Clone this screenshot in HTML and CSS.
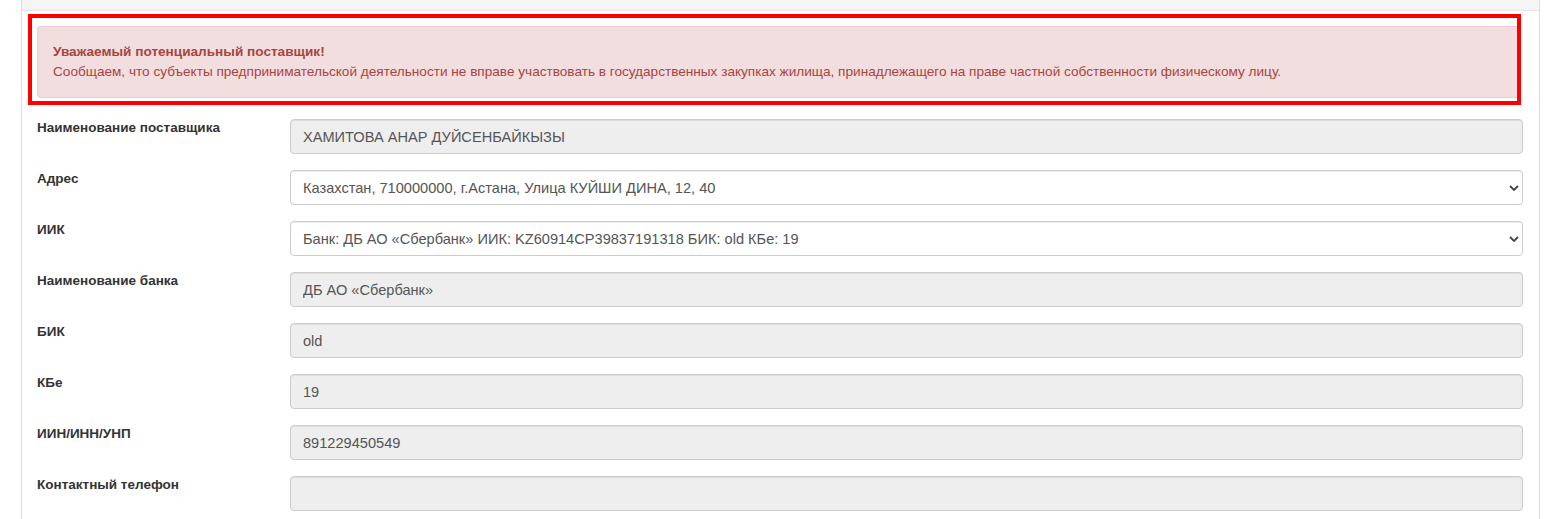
FILE: index.html
```html
<!DOCTYPE html>
<html lang="ru">
<head>
    <meta charset="UTF-8">
    <meta name="viewport" content="width=device-width, initial-scale=1.0">
    <title>Поставщик</title>
    <link rel="stylesheet" href="styles.css">
</head>
<body>
    <div class="panel">
        <div class="panel-heading"></div>
        <div class="panel-body">
            <div class="marked">
                <div class="alert">
                    <strong>Уважаемый потенциальный поставщик!</strong><br>
                    Сообщаем, что субъекты предпринимательской деятельности не вправе участвовать в государственных закупках жилища, принадлежащего на праве частной собственности физическому лицу.
                </div>
            </div>

            <div class="form-row">
                <label>Наименование поставщика</label>
                <input type="text" class="field" value="ХАМИТОВА АНАР ДУЙСЕНБАЙКЫЗЫ" disabled>
            </div>
            <div class="form-row">
                <label>Адрес</label>
                <div class="select-wrap">
                    <select class="field">
                        <option>Казахстан, 710000000, г.Астана, Улица КУЙШИ ДИНА, 12, 40</option>
                    </select>
                    <svg class="chevron" width="10" height="6" viewBox="0 0 10 6"><path d="M1 1l4 4 4-4" fill="none" stroke="#444" stroke-width="1.8"/></svg>
                </div>
            </div>
            <div class="form-row">
                <label>ИИК</label>
                <div class="select-wrap">
                    <select class="field">
                        <option>Банк: ДБ АО «Сбербанк» ИИК: KZ60914CP39837191318 БИК: old КБе: 19</option>
                    </select>
                    <svg class="chevron" width="10" height="6" viewBox="0 0 10 6"><path d="M1 1l4 4 4-4" fill="none" stroke="#444" stroke-width="1.8"/></svg>
                </div>
            </div>
            <div class="form-row">
                <label>Наименование банка</label>
                <input type="text" class="field" value="ДБ АО «Сбербанк»" disabled>
            </div>
            <div class="form-row">
                <label>БИК</label>
                <input type="text" class="field" value="old" disabled>
            </div>
            <div class="form-row">
                <label>КБе</label>
                <input type="text" class="field" value="19" disabled>
            </div>
            <div class="form-row">
                <label>ИИН/ИНН/УНП</label>
                <input type="text" class="field" value="891229450549" disabled>
            </div>
            <div class="form-row">
                <label>Контактный телефон</label>
                <input type="text" class="field" value="" disabled>
            </div>
        </div>
    </div>
</body>
</html>
```

FILE: styles.css
```css
body {
    font-family: "Liberation Sans", Arial, sans-serif;
    font-size: 13.5px;
    color: #333;
    background-color: #fff;
    margin: 0;
    padding: 0;
    overflow: hidden;
}
.panel {
    margin-left: 21px;
    width: 1517px;
    border: 1px solid #ddd;
    border-top: none;
    min-height: 540px;
}
.panel-heading {
    height: 10px;
    background-color: #f5f5f5;
    border-bottom: 1px solid #e4e4e4;
}
.panel-body {
    padding: 3px 16px 0 15px;
}
.marked {
    margin: 0 2px 0 -9px;
    border: 4px solid #ff0000;
    padding: 8px 0 3px 5px;
}
.alert {
    background-color: #f2dede;
    border: 1px solid #ebccd1;
    border-right: none;
    border-radius: 4px 0 0 4px;
    color: #a94442;
    font-size: 13.6px;
    padding: 15px 15px 15px;
    line-height: 20px;
}
.alert strong {
    font-weight: bold;
}
.form-row {
    display: flex;
    align-items: flex-start;
    margin-top: 14px;
}
.form-row + .form-row {
    margin-top: 16px;
}
.form-row label {
    width: 253px;
    flex: none;
    font-weight: bold;
    line-height: 18px;
    color: #333;
}
.field {
    flex: 1;
    width: 100%;
    box-sizing: border-box;
    height: 35px;
    padding: 0 12px;
    font-family: "Liberation Sans", Arial, sans-serif;
    font-size: 14.6px;
    color: #555;
    background-color: #fff;
    border: 1px solid #ccc;
    border-radius: 4px;
    box-shadow: inset 0 1px 1px rgba(0,0,0,0.075);
    margin: 0;
}
.field:disabled {
    background-color: #eee;
    color: #555;
    opacity: 1;
}
.select-wrap {
    flex: 1;
    position: relative;
    display: flex;
}
.select-wrap select {
    appearance: none;
    -webkit-appearance: none;
}
.chevron {
    position: absolute;
    right: 4px;
    top: 15px;
}
```
